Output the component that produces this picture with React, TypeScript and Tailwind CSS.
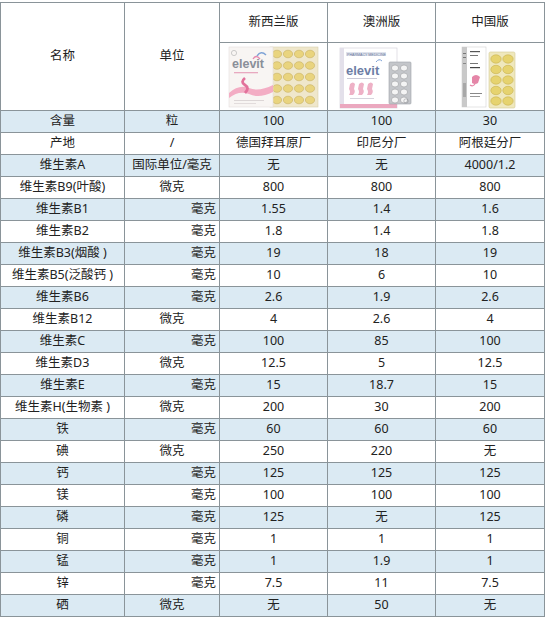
import React from "react";

type Row = [string, string, "c" | "r", string, string, string];

const rows: Row[] = [
  ["含量", "粒", "c", "100", "100", "30"],
  ["产地", "/", "c", "德国拜耳原厂", "印尼分厂", "阿根廷分厂"],
  ["维生素A", "国际单位/毫克", "c", "无", "无", "4000/1.2"],
  ["维生素B9(叶酸)", "微克", "c", "800", "800", "800"],
  ["维生素B1", "毫克", "r", "1.55", "1.4", "1.6"],
  ["维生素B2", "毫克", "r", "1.8", "1.4", "1.8"],
  ["维生素B3(烟酸 )", "毫克", "r", "19", "18", "19"],
  ["维生素B5(泛酸钙 )", "毫克", "r", "10", "6", "10"],
  ["维生素B6", "毫克", "r", "2.6", "1.9", "2.6"],
  ["维生素B12", "微克", "c", "4", "2.6", "4"],
  ["维生素C", "毫克", "r", "100", "85", "100"],
  ["维生素D3", "微克", "c", "12.5", "5", "12.5"],
  ["维生素E", "毫克", "r", "15", "18.7", "15"],
  ["维生素H(生物素 )", "微克", "c", "200", "30", "200"],
  ["铁", "毫克", "r", "60", "60", "60"],
  ["碘", "微克", "c", "250", "220", "无"],
  ["钙", "毫克", "r", "125", "125", "125"],
  ["镁", "毫克", "r", "100", "100", "100"],
  ["磷", "毫克", "r", "125", "无", "125"],
  ["铜", "毫克", "r", "1", "1", "1"],
  ["锰", "毫克", "r", "1", "1.9", "1"],
  ["锌", "毫克", "r", "7.5", "11", "7.5"],
  ["硒", "微克", "c", "无", "50", "无"],
];

function NZPack() {
  const pills = [];
  for (let r = 0; r < 5; r++) {
    for (let c = 0; c < 4; c++) {
      pills.push(
        <ellipse key={`${r}-${c}`} cx={57 + c * 11} cy={11 + r * 11.5} rx={4.6} ry={3.8} fill="#e9d47e" stroke="#c8b060" strokeWidth={0.6} />
      );
    }
  }
  return (
    <svg width="107" height="67" viewBox="0 0 107 67">
      <rect x="50" y="4" width="48" height="60" fill="#efe7cb" stroke="#d8cfae" strokeWidth="0.6" />
      {pills}
      <rect x="9" y="4" width="44" height="60" fill="#f8f5f3" stroke="#e4dcdc" strokeWidth="0.6" />
      <circle cx="14" cy="10" r="2.6" fill="none" stroke="#b9b9b9" strokeWidth="0.7" />
      <path d="M37 13 q4 -6 9 -1" fill="none" stroke="#7fa3d6" strokeWidth="1.4" />
      <path d="M33 16 q3 -5 7 0" fill="none" stroke="#e58ab0" strokeWidth="1.3" />
      <text x="12" y="25" fontSize="12.5" fontWeight="700" fill="#8a8f99" fontFamily="'Liberation Sans', sans-serif">elevit</text>
      <rect x="14" y="29" width="24" height="1.3" fill="#e8a9c0" />
      <path d="M9 50 q10 -9 20 -5 q10 4 24 -3 l0 7 q-14 7 -24 2 q-10 -4 -20 4 z" fill="#f3adc4" />
      <path d="M25 35 q-5 4 0 7 q5 3 0 8" fill="none" stroke="#e2729b" strokeWidth="2.8" />
      <rect x="14" y="57" width="30" height="1" fill="#dcd6d6" />
      <rect x="14" y="60" width="22" height="1" fill="#e2dcdc" />
    </svg>
  );
}

function AUPack() {
  const pills = [];
  for (let r = 0; r < 5; r++) {
    for (let c = 0; c < 2; c++) {
      pills.push(
        <ellipse key={`${r}-${c}`} cx={67 + c * 9} cy={25 + r * 8} rx={3.6} ry={3} fill="#f4f4f4" stroke="#9a9ca0" strokeWidth={0.6} />
      );
    }
  }
  return (
    <svg width="107" height="67" viewBox="0 0 107 67">
      <rect x="12" y="5" width="57" height="60" fill="#ffffff" stroke="#d6d3dc" strokeWidth="0.7" />
      <rect x="12" y="5" width="4" height="60" fill="#e3e0ea" />
      <rect x="18" y="9" width="40" height="4" fill="#dfe3ec" />
      <text x="19" y="12.5" fontSize="3.6" fill="#6b7aa0" fontFamily="'Liberation Sans', sans-serif">PHARMACY MEDICINE</text>
      <path d="M48 19 q3 -4 6 -1" fill="none" stroke="#7fa3d6" strokeWidth="1" />
      <text x="18" y="32" fontSize="13" fontWeight="700" fill="#6d7ea6" fontFamily="'Liberation Sans', sans-serif">elevit</text>
      <rect x="19" y="35" width="30" height="1" fill="#c9c9d6" />
      <path d="M22 41 q3 -3 5 0 l-1 5 q2 3 -1 6 l-4 0 q2 -3 0 -6 z" fill="#eeb1c6" />
      <path d="M31 41 q3 -3 5 0 l-1 5 q2 3 -1 6 l-4 0 q2 -3 0 -6 z" fill="#eeb1c6" />
      <path d="M40 41 q3 -3 5 0 l-1 5 q2 3 -1 6 l-4 0 q2 -3 0 -6 z" fill="#eeb1c6" />
      <rect x="22" y="55" width="24" height="1" fill="#d6d3dc" />
      <rect x="12" y="61" width="57" height="4" fill="#eba8bf" />
      <rect x="61" y="19" width="22" height="42" rx="1" fill="#c4c6ca" stroke="#9fa2a7" strokeWidth="0.6" />
      {pills}
      <circle cx="78" cy="58" r="2.2" fill="none" stroke="#8a8c90" strokeWidth="0.5" />
    </svg>
  );
}

function CNPack() {
  const pills = [];
  for (let r = 0; r < 5; r++) {
    for (let c = 0; c < 2; c++) {
      pills.push(
        <ellipse key={`${r}-${c}`} cx={60 + c * 12} cy={16 + r * 10.5} rx={5.2} ry={4.2} fill="#e6d36f" stroke="#c7b253" strokeWidth={0.6} />
      );
    }
  }
  return (
    <svg width="107" height="67" viewBox="0 0 107 67">
      <rect x="26" y="4" width="24" height="60" fill="#ffffff" stroke="#d2d2d2" strokeWidth="0.6" />
      <rect x="26" y="4" width="5" height="60" fill="#c9c9c9" />
      <rect x="27" y="10" width="3" height="1" fill="#777" />
      <rect x="27" y="14" width="3" height="1" fill="#777" />
      <rect x="27" y="20" width="3" height="1" fill="#888" />
      <rect x="27" y="40" width="3" height="14" fill="#a8a8a8" />
      <rect x="34" y="8" width="10" height="1.2" fill="#555" />
      <rect x="34" y="12" width="8" height="1" fill="#777" />
      <rect x="34" y="20" width="8" height="1" fill="#777" />
      <rect x="34" y="24" width="10" height="1.2" fill="#444" />
      <path d="M36 34 q4 -4 8 0 l-2 6 q-3 2 -6 0 z" fill="#e586a8" />
      <path d="M34 42 q3 2 5 -1" fill="none" stroke="#e586a8" strokeWidth="1.2" />
      <rect x="34" y="50" width="12" height="1" fill="#888" />
      <rect x="34" y="53" width="10" height="1" fill="#999" />
      <rect x="53" y="9" width="26" height="56" rx="1.5" fill="#efe8bd" stroke="#d3c995" strokeWidth="0.6" />
      {pills}
    </svg>
  );
}

export default function App() {
  const font = { fontFamily: "'Noto Sans', 'Noto Sans CJK SC', sans-serif" };
  const head = "bg-white flex items-center justify-center";
  return (
    <div className="w-[545px] h-[618px] bg-white pt-[2px] text-[12.5px] text-[#222] leading-none" style={font}>
      <div className="grid grid-cols-[123px_94px_107px_107px_108px] grid-rows-[39px_67px_repeat(23,21px)] gap-px p-px bg-[#8a9499] w-[545px]">
        <div className={`${head} row-span-2`}>名称</div>
        <div className={`${head} row-span-2`}>单位</div>
        <div className={head}>新西兰版</div>
        <div className={head}>澳洲版</div>
        <div className={head}>中国版</div>
        <div className="bg-white flex"><NZPack /></div>
        <div className="bg-white flex"><AUPack /></div>
        <div className="bg-white flex"><CNPack /></div>
        {rows.map((r, i) => {
          const bg = i % 2 === 0 ? "bg-[#dbeaf3]" : "bg-white";
          return (
            <React.Fragment key={i}>
              <div className={`${bg} flex items-center justify-center whitespace-nowrap`}>{r[0]}</div>
              <div className={`${bg} flex items-center whitespace-nowrap ${r[2] === "r" ? "justify-end pr-[3px]" : "justify-center"}`}>{r[1]}</div>
              <div className={`${bg} flex items-center justify-center whitespace-nowrap`}>{r[3]}</div>
              <div className={`${bg} flex items-center justify-center whitespace-nowrap`}>{r[4]}</div>
              <div className={`${bg} flex items-center justify-center whitespace-nowrap`}>{r[5]}</div>
            </React.Fragment>
          );
        })}
      </div>
    </div>
  );
}
